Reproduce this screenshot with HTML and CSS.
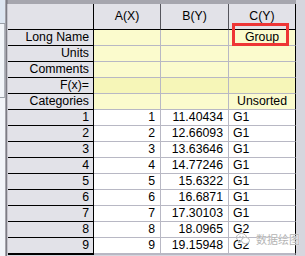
FILE: index.html
```html
<!DOCTYPE html>
<html>
<head>
<meta charset="utf-8">
<link rel="stylesheet" href="styles.css">
</head>
<body>
<div class="app">
  <div class="side">
    <div class="side-top"></div>
    <div class="side-box"></div>
    <div class="side-low"></div>
  </div>
  <div class="bar"></div>
  <div class="main">
    <div class="topstrip"></div>
    <div class="sheet">
      <div class="cell corner"></div>
      <div class="cell ch">A(X)</div>
      <div class="cell ch">B(Y)</div>
      <div class="cell ch">C(Y)</div>

      <div class="cell rh">Long Name</div>
      <div class="cell y"></div>
      <div class="cell y"></div>
      <div class="cell y ctr">Group</div>

      <div class="cell rh">Units</div>
      <div class="cell y"></div>
      <div class="cell y"></div>
      <div class="cell y"></div>

      <div class="cell rh">Comments</div>
      <div class="cell y"></div>
      <div class="cell y"></div>
      <div class="cell y"></div>

      <div class="cell rh">F(x)=</div>
      <div class="cell yf"></div>
      <div class="cell yf"></div>
      <div class="cell yf"></div>

      <div class="cell rh">Categories</div>
      <div class="cell y"></div>
      <div class="cell y"></div>
      <div class="cell y num cat">Unsorted</div>

      <div class="cell rh">1</div><div class="cell d num">1</div><div class="cell d num">11.40434</div><div class="cell d txt">G1</div>
      <div class="cell rh">2</div><div class="cell d num">2</div><div class="cell d num">12.66093</div><div class="cell d txt">G1</div>
      <div class="cell rh">3</div><div class="cell d num">3</div><div class="cell d num">13.63646</div><div class="cell d txt">G1</div>
      <div class="cell rh">4</div><div class="cell d num">4</div><div class="cell d num">14.77246</div><div class="cell d txt">G1</div>
      <div class="cell rh">5</div><div class="cell d num">5</div><div class="cell d num">15.6322</div><div class="cell d txt">G1</div>
      <div class="cell rh">6</div><div class="cell d num">6</div><div class="cell d num">16.6871</div><div class="cell d txt">G1</div>
      <div class="cell rh">7</div><div class="cell d num">7</div><div class="cell d num">17.30103</div><div class="cell d txt">G1</div>
      <div class="cell rh">8</div><div class="cell d num">8</div><div class="cell d num">18.0965</div><div class="cell d txt">G2</div>
      <div class="cell rh">9</div><div class="cell d num">9</div><div class="cell d num">19.15948</div><div class="cell d txt">G2</div>
      <div class="cell rh"></div><div class="cell d"></div><div class="cell d"></div><div class="cell d"></div>

      <div class="redbox"></div>
    </div>
  </div>
  <div class="rightpane"></div>
  <div class="watermark">
    <svg class="wm-icon" width="14" height="12" viewBox="0 0 14 12">
      <ellipse cx="5.5" cy="4.5" rx="5" ry="4" fill="none" stroke="#b8b8b8" stroke-width="1"/>
      <path d="M3 8 L2.5 10 L5 8.3" fill="none" stroke="#b8b8b8" stroke-width="1"/>
      <ellipse cx="9.5" cy="7.5" rx="4" ry="3.2" fill="#fff" stroke="#b8b8b8" stroke-width="1"/>
      <circle cx="4" cy="3.5" r="0.7" fill="#b8b8b8"/>
      <circle cx="7" cy="3.5" r="0.7" fill="#b8b8b8"/>
    </svg>
    <span class="wm-text">数据绘图</span>
  </div>
</div>
</body>
</html>
```
FILE: styles.css
```css
html, body {
  margin: 0;
  padding: 0;
}
body {
  width: 305px;
  height: 256px;
  overflow: hidden;
  background: #d6d6de;
  font-family: "Liberation Sans", Arial, sans-serif;
  font-size: 12.3px;
  color: #000;
}
.app {
  position: relative;
  display: flex;
  width: 305px;
  height: 256px;
  overflow: hidden;
}
.side {
  width: 5px;
  display: flex;
  flex-direction: column;
  background: #dde6f1;
}
.side-top {
  height: 23px;
  border-bottom: 1px solid #9aa0a8;
}
.side-box {
  height: 73px;
  background: #f2f5f9;
  border-right: 1px solid #b0b4bc;
  border-bottom: 1px solid #9aa0a8;
}
.side-low {
  flex: 1;
  background: #f2f5f9;
}
.bar {
  width: 2px;
  background: linear-gradient(to right, #a4a4ac 0 1px, #7c7c84 1px);
}
.main {
  width: 289px;
  display: flex;
  flex-direction: column;
}
.topstrip {
  height: 4px;
  background: #a6a6ae;
  border-left: 1px solid #8c8c94;
}
.sheet {
  position: relative;
  display: grid;
  grid-template-columns: 86px 67px 68px 67px;
  grid-template-rows: 26px repeat(14, 16px);
  border-left: 1px solid #c4c4cc;
}
.cell {
  box-sizing: border-box;
  border-right: 1px solid #b8b8c4;
  border-bottom: 1px solid #b8b8c4;
  line-height: 15px;
  white-space: nowrap;
  overflow: hidden;
}
.corner, .ch {
  background: #e2e2e8;
  border-right: 1px solid #55555c;
  border-bottom: 1px solid #000;
  text-align: center;
  line-height: 25px;
}
.corner {
  border-right-color: #000;
}
.rh {
  background: #e2e2e8;
  border-right: 1px solid #000;
  border-bottom: 1px solid #000;
  text-align: right;
  padding-right: 4px;
}
.y {
  background: #fbfbcd;
}
.yf {
  background: #f6f6b8;
}
.d {
  background: #fff;
}
.num {
  text-align: right;
  padding-right: 5px;
}
.txt {
  text-align: left;
  padding-left: 4px;
}
.ctr {
  text-align: center;
}
.cat {
  padding-right: 8px;
}
.ch:last-child,
.sheet > .cell:nth-child(4n) {
  border-right-color: #000;
}
.redbox {
  position: absolute;
  left: 224px;
  top: 19px;
  width: 57px;
  height: 23px;
  box-sizing: border-box;
  border: 3px solid #ee3636;
}
.rightpane {
  flex: 1;
  background: #d6d6de;
}
.watermark {
  position: absolute;
  left: 236px;
  top: 232px;
  display: flex;
  align-items: center;
  gap: 6px;
}
.wm-icon {
  display: block;
}
.wm-text {
  font-family: "Noto Sans CJK SC", sans-serif;
  font-size: 11px;
  line-height: 14px;
  color: #b4b4b4;
  letter-spacing: 0px;
  text-shadow: 0 0 1px #fff, 0 0 1px #fff;
}
```
